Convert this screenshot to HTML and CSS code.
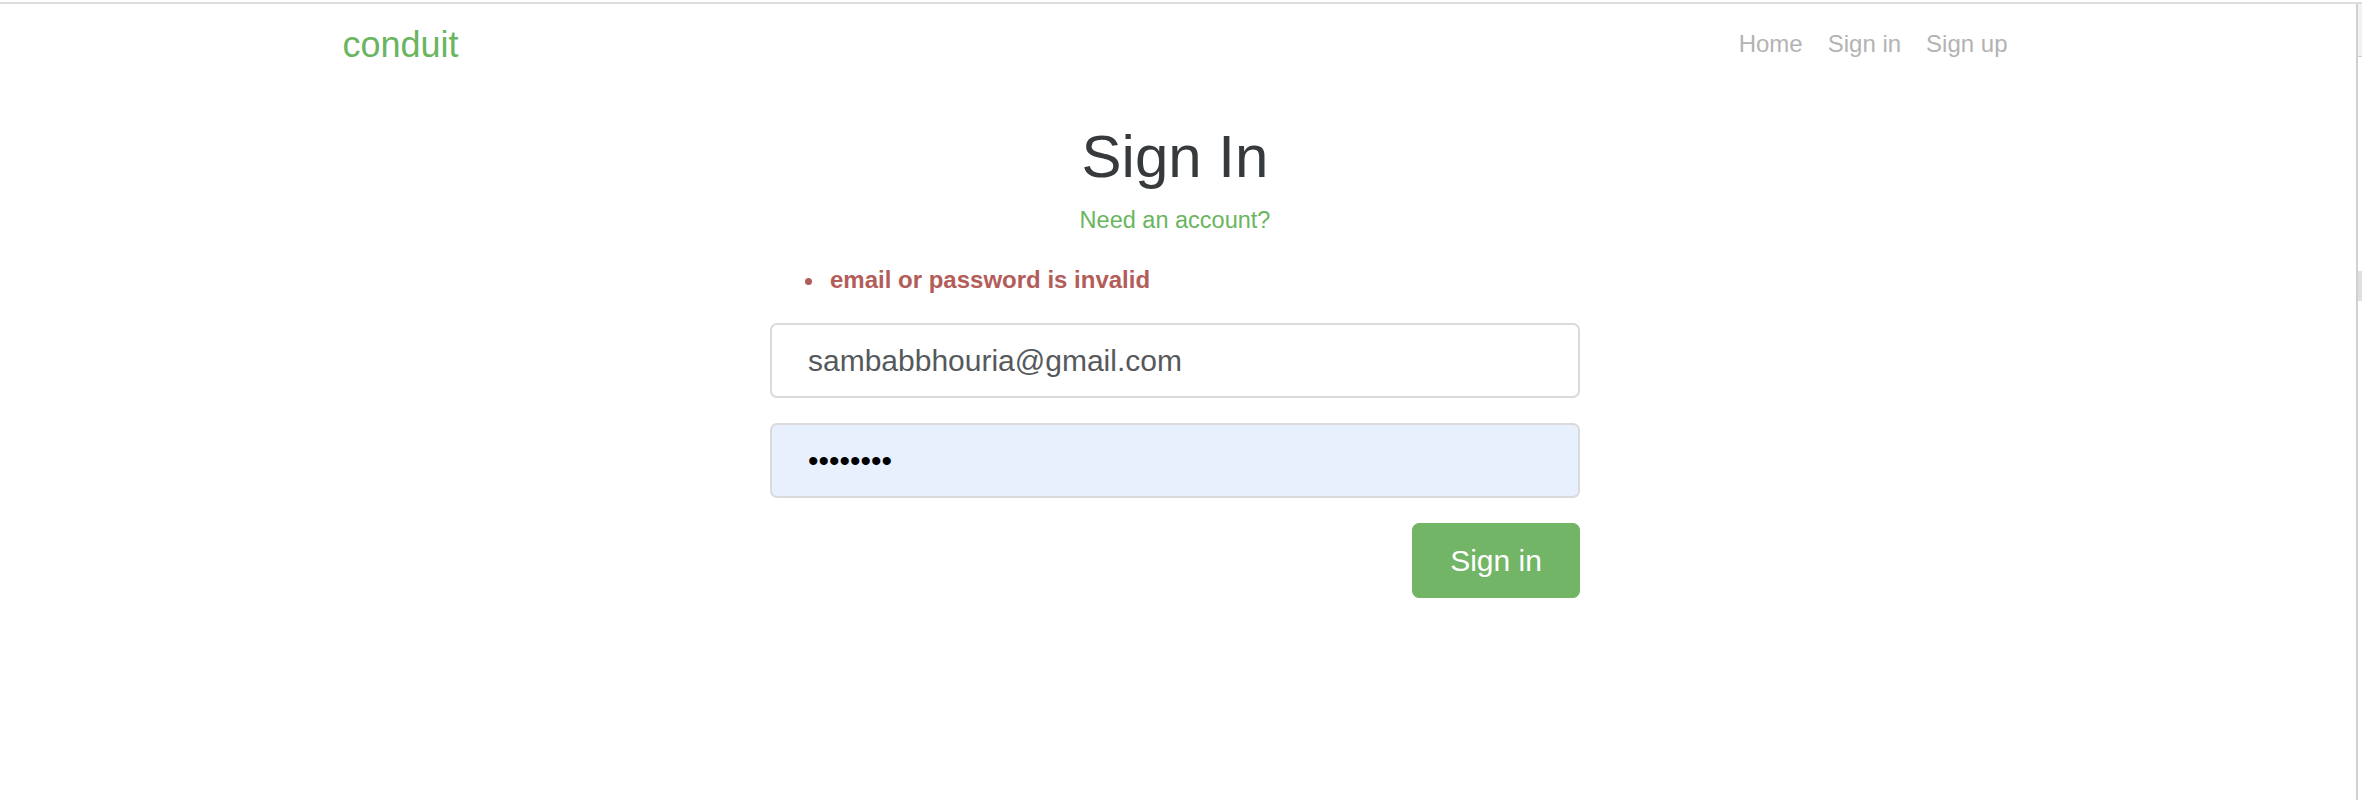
FILE: index.html
```html
<!DOCTYPE html>
<html lang="en">
<head>
<meta charset="utf-8">
<title>Sign in — Conduit</title>
<link rel="stylesheet" href="styles.css">
</head>
<body>
<div class="chrome-top"></div>
<div class="frame">
  <div class="viewport">
    <nav class="navbar">
      <div class="container nav-inner">
        <a class="brand" href="#">conduit</a>
        <ul class="nav-links">
          <li><a href="#">Home</a></li>
          <li><a href="#">Sign in</a></li>
          <li><a href="#">Sign up</a></li>
        </ul>
      </div>
    </nav>
    <main class="auth-page">
      <div class="auth-col">
        <h1 class="auth-title">Sign In</h1>
        <p class="auth-switch"><a href="#">Need an account?</a></p>
        <ul class="error-messages">
          <li>email or password is invalid</li>
        </ul>
        <form class="auth-form">
          <input class="form-control" type="email" value="sambabbhouria@gmail.com">
          <input class="form-control autofilled" type="password" value="12345678">
          <div class="form-actions">
            <button class="btn-primary" type="button">Sign in</button>
          </div>
        </form>
      </div>
    </main>
  </div>
  <div class="edge"></div>
  <div class="strip">
    <div class="strip-top"></div>
    <div class="strip-gap"></div>
    <div class="strip-block"></div>
  </div>
</div>
</body>
</html>
```
FILE: styles.css
```css
* { box-sizing: border-box; }

html, body {
  margin: 0;
  padding: 0;
  background: #ffffff;
}

body {
  font-family: "Liberation Sans", Arial, Helvetica, sans-serif;
  color: #373a3c;
  overflow: hidden;
}

.chrome-top {
  height: 2px;
  margin-top: 2px;
  background: #dcdce1;
}

.frame {
  display: flex;
  height: 796px;
}

.viewport {
  width: 2356px;
  flex: none;
  padding-right: 6px;
}

.edge {
  width: 2px;
  flex: none;
  background: #d0d0d0;
}

.strip {
  width: 4px;
  flex: none;
  display: flex;
  flex-direction: column;
}

.strip-top {
  height: 53px;
  background: #f2f2f2;
  border-bottom: 1px solid #d0d0d0;
}

.strip-gap {
  height: 214px;
}

.strip-block {
  height: 30px;
  background: #e0e0e0;
}

.container {
  width: 1665px;
  margin: 0 auto;
}

/* navbar */
.navbar {
  height: 80px;
}

.nav-inner {
  display: flex;
  justify-content: space-between;
  align-items: flex-start;
}

.brand {
  margin-top: 19px;
  font-size: 36px;
  line-height: 44px;
  color: #6ab55f;
  text-decoration: none;
}

.nav-links {
  list-style: none;
  margin: 25px 0 0;
  padding: 0;
  display: flex;
  gap: 25px;
}

.nav-links a {
  font-size: 24px;
  line-height: 30px;
  color: #b3b3b3;
  text-decoration: none;
}

/* auth */
.auth-page {
  display: flex;
  justify-content: center;
}

.auth-col {
  width: 810px;
}

.auth-title {
  margin: 40px 0 12px;
  font-size: 60px;
  line-height: 66px;
  font-weight: 400;
  text-align: center;
  color: #373a3c;
}

.auth-switch {
  margin: 0 0 24px;
  font-size: 23.5px;
  line-height: 36px;
  text-align: center;
}

.auth-switch a {
  color: #6ab55f;
  text-decoration: none;
}

.error-messages {
  margin: 0 0 25px;
  padding-left: 60px;
  font-size: 24px;
  line-height: 36px;
  font-weight: 700;
  color: #b35d5a;
}

.error-messages li {
  padding-left: 4px;
  margin-left: -4px;
}

.auth-form {
  display: flex;
  flex-direction: column;
  gap: 25px;
}

.form-control {
  display: block;
  width: 100%;
  height: 75px;
  padding: 0 36px;
  font-family: "Liberation Sans", Arial, Helvetica, sans-serif;
  font-size: 30px;
  color: #55595c;
  background: #ffffff;
  border: 2px solid #dadada;
  border-radius: 7px;
  outline: none;
}

.form-control.autofilled {
  background: #e8f0fe;
  color: #000000;
}

.form-actions {
  display: flex;
  justify-content: flex-end;
}

.btn-primary {
  height: 75px;
  width: 168px;
  padding: 0;
  font-family: "Liberation Sans", Arial, Helvetica, sans-serif;
  font-size: 30px;
  color: #ffffff;
  background: #73b566;
  border: 1px solid #73b566;
  border-radius: 7px;
}
```
